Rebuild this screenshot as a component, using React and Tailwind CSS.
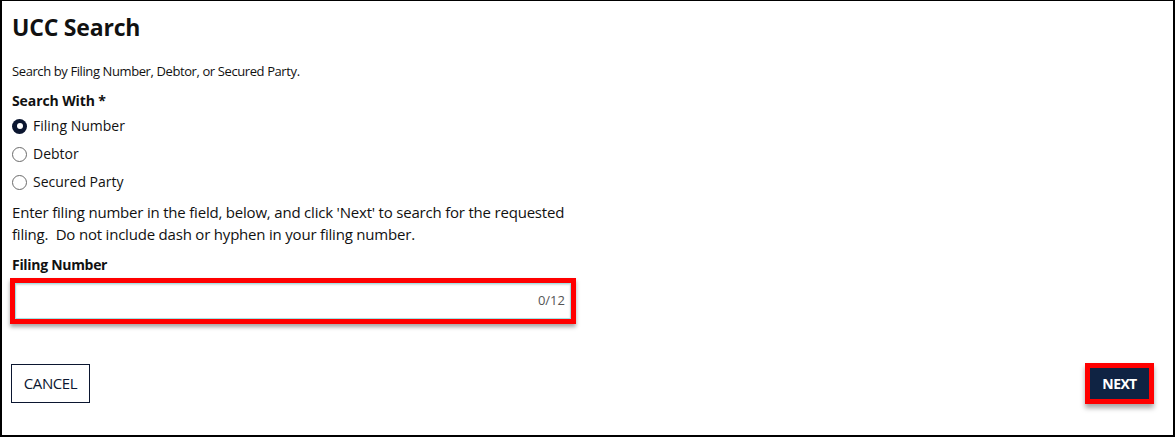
import React, { useState } from 'react';

const options = ['Filing Number', 'Debtor', 'Secured Party'];

function Radio({ checked }) {
  return checked ? (
    <span className="w-[15px] h-[15px] rounded-full bg-[#0b1630] flex items-center justify-center shrink-0">
      <span className="w-[6px] h-[6px] rounded-full bg-white" />
    </span>
  ) : (
    <span className="w-[15px] h-[15px] rounded-full border border-[#6b6b6b] bg-white shrink-0" />
  );
}

export default function App() {
  const [choice, setChoice] = useState('Filing Number');

  return (
    <div
      className="w-[1175px] h-[437px] bg-white border-2 border-t border-black text-[#111] flex flex-col overflow-hidden"
      style={{ fontFamily: '"Open Sans", "Noto Sans", sans-serif' }}
    >
      <div className="pl-[10px] pr-[20px] pt-[10px] flex flex-col">
        <h1 className="text-[23px] font-bold leading-[32px] tracking-[-0.2px]">UCC Search</h1>

        <p className="mt-[20px] text-[13px] leading-[16px] tracking-[-0.4px]">Search by Filing Number, Debtor, or Secured Party.</p>

        <div className="mt-[12px] text-[14px] font-bold leading-[20px] tracking-[-0.1px]">Search With *</div>

        <div className="flex flex-col mt-[1px]">
          {options.map((o) => (
            <label
              key={o}
              className="flex items-center gap-[6px] h-[28px] text-[14px] leading-[20px] cursor-pointer"
              onClick={() => setChoice(o)}
            >
              <Radio checked={choice === o} />
              <span>{o}</span>
            </label>
          ))}
        </div>

        <p className="mt-[5px] w-[565px] text-[15px] leading-[22px] tracking-[-0.2px]">
          Enter filing number in the field, below, and click 'Next' to search for the requested filing.&nbsp; Do not include dash or hyphen in your filing number.
        </p>

        <div className="mt-[10px] text-[14px] font-bold leading-[20px] tracking-[-0.3px]">Filing Number</div>

        <div className="mt-[3px] ml-[-2px] w-[566px] h-[46px] border-[5px] border-[#ff0000] shadow-[0_3px_4px_rgba(0,0,0,0.35)] flex">
          <div className="flex-1 border border-[#9fe3e6] bg-white flex items-center justify-end pr-[5px] shadow-[inset_0_1px_2px_rgba(0,0,0,0.15)]">
            <span className="text-[13px] text-[#555]">0/12</span>
          </div>
        </div>
      </div>

      <div className="mt-auto mb-[31px] pl-[9px] pr-[19px] flex items-center justify-between">
        <button className="w-[79px] h-[39px] border-[1.5px] border-[#0b1630] bg-white text-[15px] text-[#0b1630] tracking-[-0.4px]">
          CANCEL
        </button>
        <div className="w-[69px] h-[41px] border-[5px] border-[#ff0000] shadow-[0_4px_5px_rgba(0,0,0,0.35)] flex">
          <button className="flex-1 bg-[#0f2343] text-white text-[14px] font-bold tracking-[-0.6px]">NEXT</button>
        </div>
      </div>
    </div>
  );
}
